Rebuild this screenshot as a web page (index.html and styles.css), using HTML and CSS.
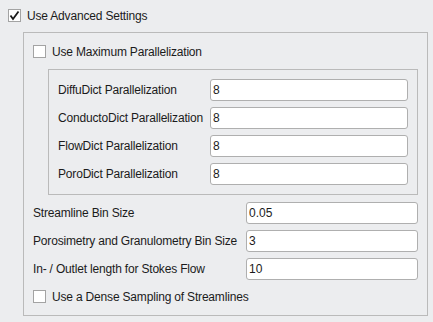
FILE: index.html
```html
<!DOCTYPE html>
<html lang="en">

<head>
    <meta charset="UTF-8">
    <title>Advanced Settings</title>
    <link rel="stylesheet" href="styles.css">
</head>

<body>
    <div class="panel">
        <label class="check">
            <span class="box">
                <svg width="11" height="11" viewBox="0 0 11 11"><path d="M1.5 5.5 L4 9 L9.5 1.5" fill="none" stroke="#1a1a1a" stroke-width="1.8"/></svg>
            </span>
            Use Advanced Settings
        </label>

        <div class="group outer">
            <label class="check">
                <span class="box"></span>
                Use Maximum Parallelization
            </label>

            <div class="group inner">
                <div class="row"><span>DiffuDict Parallelization</span><input type="text" value="8"></div>
                <div class="row"><span>ConductoDict Parallelization</span><input type="text" value="8"></div>
                <div class="row"><span>FlowDict Parallelization</span><input type="text" value="8"></div>
                <div class="row"><span>PoroDict Parallelization</span><input type="text" value="8"></div>
            </div>

            <div class="rows">
                <div class="row wide"><span>Streamline Bin Size</span><input type="text" value="0.05"></div>
                <div class="row wide"><span>Porosimetry and Granulometry Bin Size</span><input type="text" value="3"></div>
                <div class="row wide"><span>In- / Outlet length for Stokes Flow</span><input type="text" value="10"></div>
            </div>

            <label class="check dense">
                <span class="box"></span>
                Use a Dense Sampling of Streamlines
            </label>
        </div>
    </div>
</body>

</html>
```

FILE: styles.css
```css
/* page */
body {
    margin: 0;
    background: #ecedef;
    font-family: "Liberation Sans", Arial, sans-serif;
    font-size: 12px;
    letter-spacing: -0.18px;
    color: #1b1b1b;
}

.panel {
    padding: 9px 0 0 8px;
}

/* checkboxes */
.check {
    display: flex;
    align-items: center;
    gap: 6px;
    height: 13px;
}

.box {
    width: 13px;
    height: 13px;
    box-sizing: border-box;
    border: 1px solid #a3a3a3;
    background: #fff;
    display: flex;
    align-items: center;
    justify-content: center;
}

/* group boxes */
.group {
    border: 1px solid #bababa;
    box-sizing: border-box;
}

.outer {
    margin: 10px 0 0 15px;
    width: 405px;
    padding: 12px 9px 12px 9px;
}

.inner {
    margin: 11px 0 0 15px;
    width: 370px;
    padding: 9px;
    display: flex;
    flex-direction: column;
    gap: 6px;
}

.rows {
    margin-top: 7px;
    display: flex;
    flex-direction: column;
    gap: 6px;
}

.row {
    display: grid;
    grid-template-columns: 152px 1fr;
    align-items: center;
}

.row.wide {
    grid-template-columns: 213px 1fr;
}

.row span {
    white-space: nowrap;
}

input {
    height: 22px;
    box-sizing: border-box;
    border: 1px solid #afafaf;
    border-radius: 3px;
    background: #fff;
    padding: 0 2px;
    font-family: "Liberation Sans", Arial, sans-serif;
    font-size: 12px;
    color: #1b1b1b;
    width: 100%;
}

.dense {
    margin-top: 10px;
}
```
